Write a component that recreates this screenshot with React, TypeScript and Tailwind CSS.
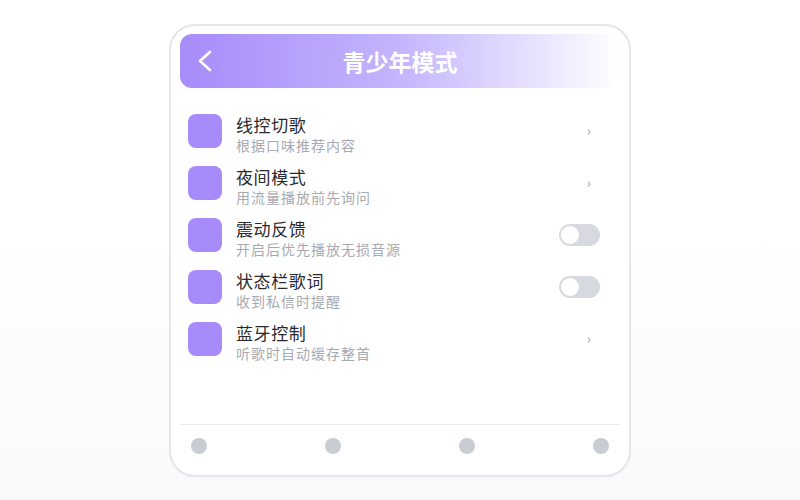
import React from "react";

type Row = { title: string; sub: string; kind: "chevron" | "toggle" };

const rows: Row[] = [
  { title: "线控切歌", sub: "根据口味推荐内容", kind: "chevron" },
  { title: "夜间模式", sub: "用流量播放前先询问", kind: "chevron" },
  { title: "震动反馈", sub: "开启后优先播放无损音源", kind: "toggle" },
  { title: "状态栏歌词", sub: "收到私信时提醒", kind: "toggle" },
  { title: "蓝牙控制", sub: "听歌时自动缓存整首", kind: "chevron" },
];

export default function App() {
  return (
    <div
      className="h-[500px] w-[800px] flex justify-center pt-[24px] bg-[linear-gradient(180deg,#ffffff_0%,#ffffff_45%,#f9f9fb_100%)]"
      style={{ fontFamily: '"Noto Sans CJK SC", "Noto Sans", sans-serif' }}
    >
      <div className="w-[462px] h-[453px] box-border border-2 border-[#e6e6ea] rounded-[26px] bg-white flex flex-col px-[9px] pt-[8px]">
        <div className="relative h-[54px] rounded-[12px] bg-[linear-gradient(90deg,#a78bfa_0%,#c4b5fd_50%,#ffffff_100%)] flex items-center justify-center">
          <svg
            className="absolute left-[17px] top-[16px]"
            width="16"
            height="22"
            viewBox="0 0 16 22"
            fill="none"
          >
            <path d="M13 2 L3 11 L13 20" stroke="#ffffff" strokeWidth="2.6" strokeLinecap="round" strokeLinejoin="round" />
          </svg>
          <span className="text-white text-[23px] font-bold leading-none">青少年模式</span>
        </div>

        <div className="mt-[26px] flex flex-col px-[8px]">
          {rows.map((r) => (
            <div key={r.title} className="h-[52px] flex items-start">
              <div className="w-[34px] h-[34px] rounded-[8px] bg-[#a78bfa] shrink-0" />
              <div className="ml-[14px] flex-1 flex flex-col">
                <span className="text-[17px] leading-[22px] text-[#2a2a2e] tracking-[0.6px]">{r.title}</span>
                <span className="text-[14px] leading-[19px] text-[#a7aab1] tracking-[1px]">{r.sub}</span>
              </div>
              <div className="h-[34px] flex items-center pr-[12px]">
                {r.kind === "chevron" ? (
                  <span className="text-[14px] leading-none text-[#9ca3af] mr-[9px] -mt-[2px]">›</span>
                ) : (
                  <div className="w-[41px] h-[22px] rounded-full bg-[#d6d9df] p-[2px] flex items-center">
                    <div className="w-[18px] h-[18px] rounded-full bg-white" />
                  </div>
                )}
              </div>
            </div>
          ))}
        </div>

        <div className="flex-1" />

        <div className="border-t border-[#ececf0] pt-[13px] pb-[21px] px-[11px] flex justify-between">
          {[0, 1, 2, 3].map((i) => (
            <div key={i} className="w-4 h-4 rounded-full bg-[#c8ccd3]" />
          ))}
        </div>
      </div>
    </div>
  );
}
